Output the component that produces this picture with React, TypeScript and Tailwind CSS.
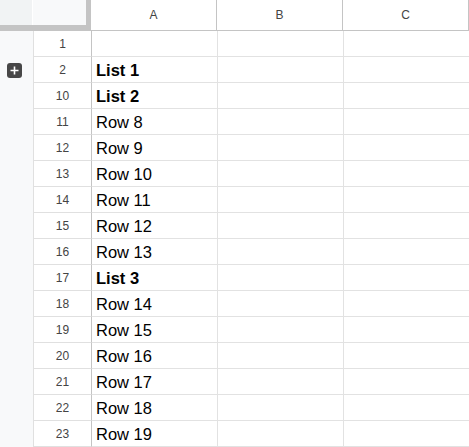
const rows: { n: number; text: string; bold?: boolean }[] = [
  { n: 1, text: '' },
  { n: 2, text: 'List 1', bold: true },
  { n: 10, text: 'List 2', bold: true },
  { n: 11, text: 'Row 8' },
  { n: 12, text: 'Row 9' },
  { n: 13, text: 'Row 10' },
  { n: 14, text: 'Row 11' },
  { n: 15, text: 'Row 12' },
  { n: 16, text: 'Row 13' },
  { n: 17, text: 'List 3', bold: true },
  { n: 18, text: 'Row 14' },
  { n: 19, text: 'Row 15' },
  { n: 20, text: 'Row 16' },
  { n: 21, text: 'Row 17' },
  { n: 22, text: 'Row 18' },
  { n: 23, text: 'Row 19' },
];

const cols = ['A', 'B', 'C'];

export default function App() {
  return (
    <div
      className="w-[469px] h-[447px] overflow-hidden bg-white text-[#222]"
      style={{ fontFamily: '"Liberation Sans", Arial, sans-serif' }}
    >
      {/* Header row */}
      <div className="flex h-[31px]">
        <div className="w-[92px] flex flex-col">
          <div className="flex h-[25px]">
            <div className="w-[33px] bg-[#f1f3f4] border-r border-white" />
            <div className="flex-1 bg-[#f8f9fa]" />
            <div className="w-[5px] bg-[#c4c4c4]" />
          </div>
          <div className="h-[5px] bg-[#c4c4c4]" />
          <div className="h-[1px] bg-[#c4c4c4]" />
        </div>
        {cols.map((c) => (
          <div
            key={c}
            className="w-[126px] shrink-0 border-r border-b border-[#c4c4c4] flex items-center justify-center text-[12px] text-[#444]"
          >
            {c}
          </div>
        ))}
      </div>

      {/* Body */}
      <div className="flex">
        <div className="w-[34px] shrink-0 bg-[#f8f9fa] border-r border-[#e0e0e0] relative">
          <div className="absolute left-[7px] top-[32px] w-[15px] h-[15px] rounded-[3px] bg-[#474747] flex items-center justify-center">
            <svg width="11" height="11" viewBox="0 0 11 11">
              <path d="M5.5 1.5v8M1.5 5.5h8" stroke="#fff" strokeWidth="1.6" />
            </svg>
          </div>
        </div>
        <div className="flex flex-col">
          {rows.map((r) => (
            <div key={r.n} className="flex h-[26px]">
              <div className="w-[58px] shrink-0 border-r border-b border-r-[#c4c4c4] border-b-[#e0e0e0] flex items-center justify-center text-[12px] text-[#444]">
                {r.n}
              </div>
              <div
                className={`w-[126px] shrink-0 border-r border-b border-[#e2e2e2] flex items-center pl-[4px] pt-[1px] text-[16.5px] text-black ${
                  r.bold ? 'font-bold' : ''
                }`}
              >
                {r.text}
              </div>
              <div className="w-[126px] shrink-0 border-r border-b border-[#e2e2e2]" />
              <div className="w-[126px] shrink-0 border-r border-b border-[#e2e2e2]" />
            </div>
          ))}
        </div>
      </div>
    </div>
  );
}
